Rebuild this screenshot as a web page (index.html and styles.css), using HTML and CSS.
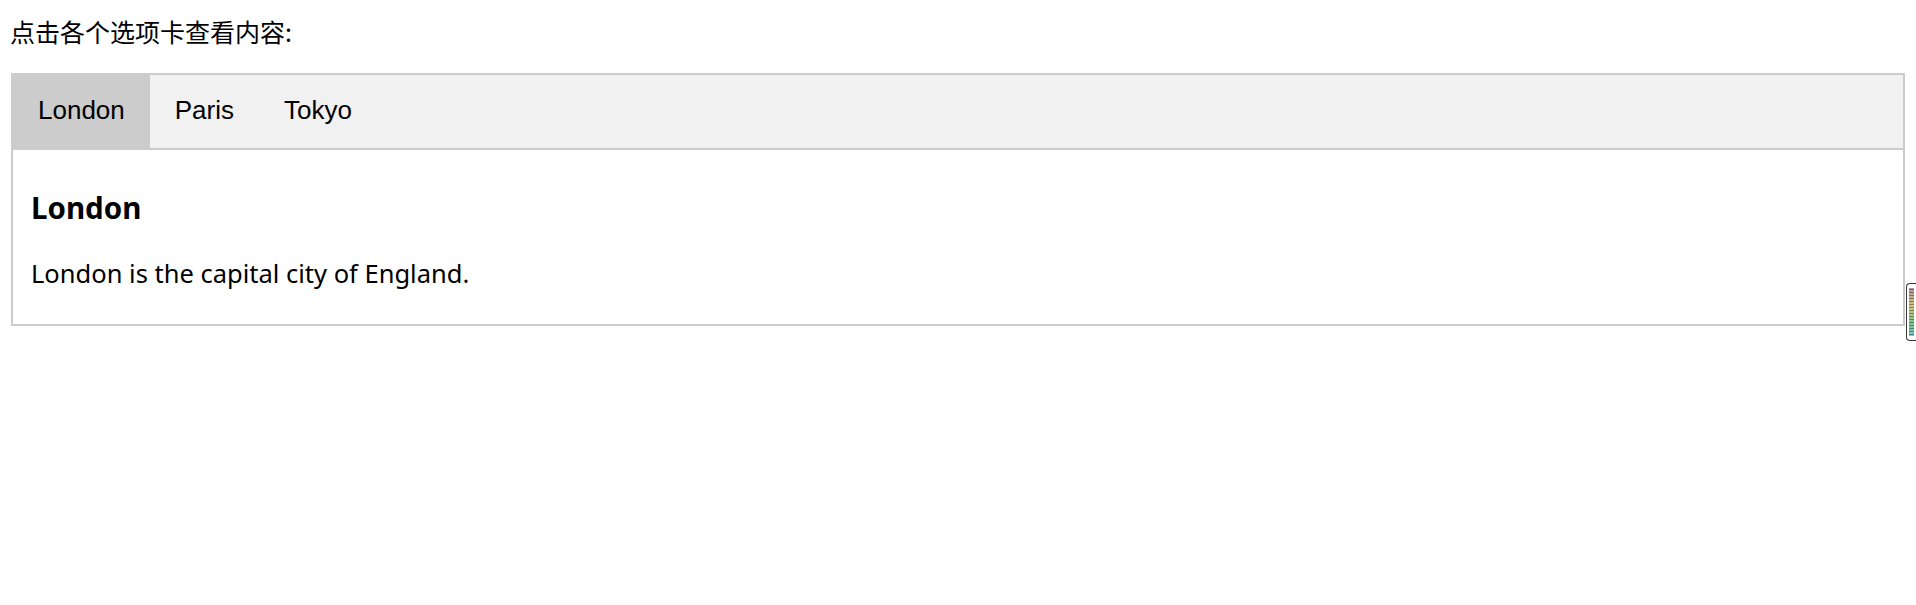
FILE: index.html
```html
<!DOCTYPE html>
<html lang="zh">
<head>
    <meta charset="UTF-8">
    <meta name="viewport" content="width=device-width, initial-scale=1.0">
    <title>Tabs</title>
    <link rel="stylesheet" href="styles.css">
</head>
<body>
    <p class="intro">点击各个选项卡查看内容:</p>

    <div class="tab">
        <button class="tablinks active" data-city="London">London</button>
        <button class="tablinks" data-city="Paris">Paris</button>
        <button class="tablinks" data-city="Tokyo">Tokyo</button>
    </div>

    <div id="London" class="tabcontent shown">
        <h3>London</h3>
        <p>London is the capital city of England.</p>
    </div>

    <div id="Paris" class="tabcontent">
        <h3>Paris</h3>
        <p>Paris is the capital of France.</p>
    </div>

    <div id="Tokyo" class="tabcontent">
        <h3>Tokyo</h3>
        <p>Tokyo is the capital of Japan.</p>
    </div>

    <div class="side-widget"></div>

    <script>
        const tabButtons = document.querySelectorAll('.tablinks');
        const tabPanels = document.querySelectorAll('.tabcontent');

        function openCity(city) {
            tabPanels.forEach(panel => panel.classList.remove('shown'));
            tabButtons.forEach(btn => btn.classList.remove('active'));
            document.getElementById(city).classList.add('shown');
            document.querySelector(`.tablinks[data-city="${city}"]`).classList.add('active');
        }

        tabButtons.forEach(btn => {
            btn.addEventListener('click', () => openCity(btn.dataset.city));
        });
    </script>
</body>
</html>
```

FILE: styles.css
```css
body {
    margin: 0 11px;
    font-family: "Noto Sans", "Noto Sans CJK SC", sans-serif;
    color: #000;
}

.intro {
    margin: 14px 0 25px -1px;
    font-size: 25px;
    line-height: 34px;
    font-family: "Noto Sans CJK SC", sans-serif;
}

.tab {
    display: flex;
    border: 2px solid #ccc;
    background-color: #f1f1f1;
}

.tablinks {
    padding: 20px 25px 22px;
    font-family: "Liberation Sans", Arial, sans-serif;
    font-size: 26px;
    line-height: 31px;
    color: #000;
    background-color: inherit;
    border: none;
    outline: none;
    cursor: pointer;
}

.tablinks:hover {
    background-color: #ddd;
}

.tablinks.active {
    background-color: #ccc;
}

.tabcontent {
    display: none;
    padding: 9px 18px;
    border: 2px solid #ccc;
    border-top: none;
}

.tabcontent.shown {
    display: block;
}

.tabcontent h3 {
    margin: 29px 0;
    font-size: 29.5px;
    line-height: 39px;
}

.tabcontent p {
    margin: 25px 0;
    font-size: 25.5px;
    line-height: 34px;
}

/* browser extension handle on the right edge */
.side-widget {
    position: absolute;
    top: 283px;
    right: 0;
    width: 10px;
    height: 58px;
    padding: 4px 2px;
    box-sizing: border-box;
    border: 1px solid #3a3a3a;
    border-right: none;
    border-radius: 4px 0 0 4px;
    background:
        repeating-linear-gradient(to bottom, transparent 0 2px, rgba(0, 0, 0, 0.35) 2px 3px),
        linear-gradient(to bottom, #b48aa8, #d4c67a 40%, #7ec48c 70%, #6fd0d6);
    background-clip: content-box;
    background-color: #555;
}
```
